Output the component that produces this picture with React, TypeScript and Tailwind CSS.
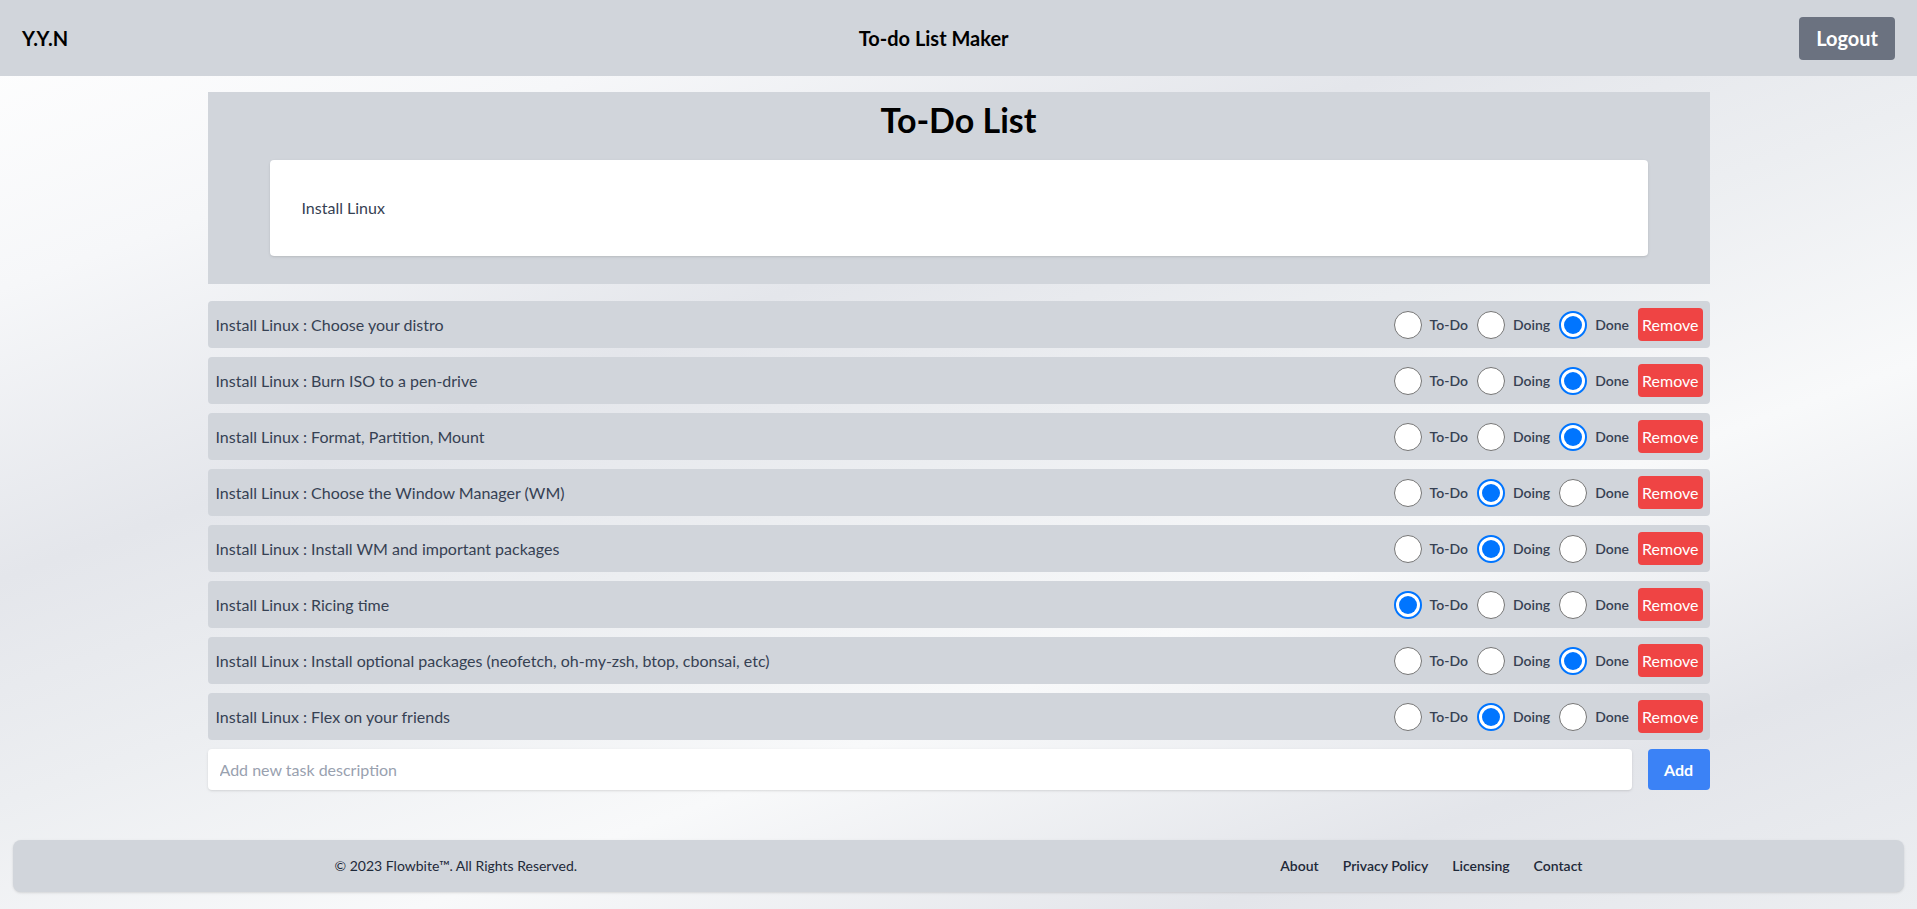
type Status = "todo" | "doing" | "done";

interface Task {
  text: string;
  status: Status;
}

const tasks: Task[] = [
  { text: "Install Linux : Choose your distro", status: "done" },
  { text: "Install Linux : Burn ISO to a pen-drive", status: "done" },
  { text: "Install Linux : Format, Partition, Mount", status: "done" },
  { text: "Install Linux : Choose the Window Manager (WM)", status: "doing" },
  { text: "Install Linux : Install WM and important packages", status: "doing" },
  { text: "Install Linux : Ricing time", status: "todo" },
  { text: "Install Linux : Install optional packages (neofetch, oh-my-zsh, btop, cbonsai, etc)", status: "done" },
  { text: "Install Linux : Flex on your friends", status: "doing" },
];

function Radio({ checked }: { checked: boolean }) {
  if (checked) {
    return (
      <span className="flex shrink-0 items-center justify-center w-7 h-7 rounded-full bg-white border-2 border-[#0075ff]">
        <span className="w-[18px] h-[18px] rounded-full bg-[#0075ff]" />
      </span>
    );
  }
  return <span className="shrink-0 w-7 h-7 rounded-full bg-white border border-[#767676]" />;
}

function TaskRow({ task }: { task: Task }) {
  const options: { key: Status; label: string }[] = [
    { key: "todo", label: "To-Do" },
    { key: "doing", label: "Doing" },
    { key: "done", label: "Done" },
  ];
  return (
    <li className="flex items-center justify-between h-[47px] pl-[8px] pr-[7px] bg-[#d1d5db] rounded">
      <span className="text-base text-gray-700">{task.text}</span>
      <div className="flex items-center">
        {options.map((o) => (
          <label key={o.key} className="flex items-center mr-[9px]">
            <Radio checked={task.status === o.key} />
            <span className="ml-2 text-sm font-semibold text-gray-700">{o.label}</span>
          </label>
        ))}
        <button className="h-[33px] px-1 bg-[#ef4444] text-white text-base rounded-sm">Remove</button>
      </div>
    </li>
  );
}

export default function App() {
  return (
    <div
      className="min-h-screen flex flex-col bg-[linear-gradient(160deg,#ffffff_0%,#f6f7f9_18%,#e4e6eb_36%,#eceef1_50%,#f8f9fa_66%,#e3e5ea_84%,#eceef1_100%)] text-gray-900"
      style={{ fontFamily: "Lato, 'Open Sans', sans-serif" }}
    >
      <header className="flex items-center justify-between h-[76px] px-[22px] bg-[#d1d5db]">
        <span className="text-xl font-bold text-black">Y.Y.N</span>
        <h1 className="text-xl font-bold text-black">To-do List Maker</h1>
        <button className="h-[43px] px-[17px] bg-[#6b7280] text-white text-xl font-bold rounded">Logout</button>
      </header>

      <main className="flex-1 w-[1502px] mx-auto pt-4">
        <section className="flex flex-col items-center pt-2.5 pb-7 bg-[#d1d5db]">
          <h2 className="text-[34px] font-bold text-black leading-9">To-Do List</h2>
          <div className="flex items-center w-[1378px] h-24 mt-[22px] px-8 bg-white rounded shadow">
            <span className="text-base text-gray-700">Install Linux</span>
          </div>
        </section>

        <ul className="flex flex-col gap-[9px] mt-[17px]">
          {tasks.map((t) => (
            <TaskRow key={t.text} task={t} />
          ))}
        </ul>

        <div className="flex items-center gap-4 mt-[9px]">
          <input
            className="flex-1 h-[41px] px-3 bg-white rounded shadow text-base text-gray-700 placeholder:text-gray-400 outline-none"
            placeholder="Add new task description"
          />
          <button className="w-[62px] h-[41px] bg-[#3b82f6] text-white text-base font-bold rounded">Add</button>
        </div>
      </main>

      <footer className="mx-[13px] mb-[17px] mt-12 h-[52px] bg-[#d1d5db] rounded-lg shadow">
        <div className="flex items-center justify-between h-full max-w-screen-xl mx-auto px-4">
          <span className="text-sm text-gray-800">© 2023 Flowbite™. All Rights Reserved.</span>
          <ul className="flex items-center text-sm font-semibold text-gray-800">
            <li className="mr-6">About</li>
            <li className="mr-6">Privacy Policy</li>
            <li className="mr-6">Licensing</li>
            <li>Contact</li>
          </ul>
        </div>
      </footer>
    </div>
  );
}
